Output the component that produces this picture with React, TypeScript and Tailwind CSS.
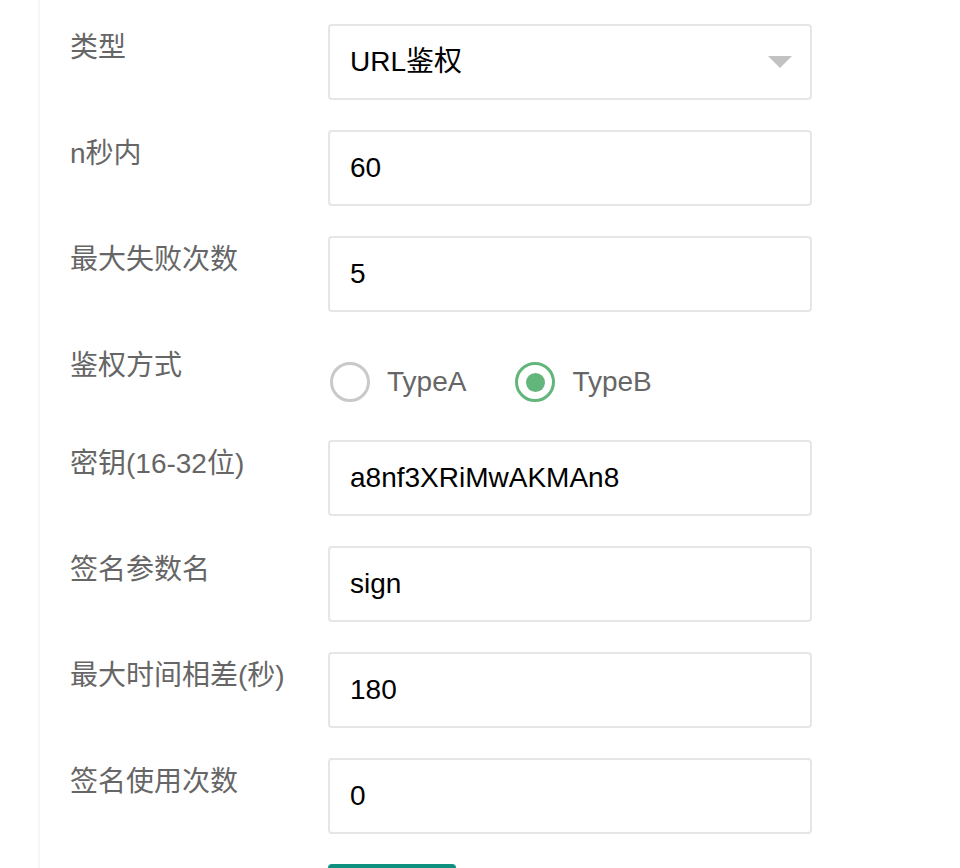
import React from "react";

const FONT = "font-['Liberation_Sans','Noto_Sans_CJK_SC',sans-serif]";

const FIELDS_TOP = [
  { label: "n秒内", value: "60" },
  { label: "最大失败次数", value: "5" },
];

const FIELDS_BOTTOM = [
  { label: "密钥(16-32位)", value: "a8nf3XRiMwAKMAn8" },
  { label: "签名参数名", value: "sign" },
  { label: "最大时间相差(秒)", value: "180" },
  { label: "签名使用次数", value: "0" },
];

function Label({ children }: { children: React.ReactNode }) {
  return (
    <div className="w-[258px] shrink-0 h-[48px] leading-[48px] text-[28px] text-[#666666]">
      {children}
    </div>
  );
}

function TextField({ label, value }: { label: string; value: string }) {
  return (
    <div className="flex shrink-0">
      <Label>{label}</Label>
      <input
        readOnly
        defaultValue={value}
        className={`w-[484px] h-[76px] border-2 border-[#e6e6e6] rounded-[4px] bg-white px-[20px] text-[28px] text-black outline-none ${FONT}`}
      />
    </div>
  );
}

function Radio({ label, checked }: { label: string; checked?: boolean }) {
  return (
    <label className="flex items-center gap-[17px] cursor-pointer">
      <span
        className={`w-[40px] h-[40px] rounded-full border-[3px] flex items-center justify-center ${
          checked ? "border-[#62b67b]" : "border-[#c9c9c9]"
        }`}
      >
        {checked && <span className="w-[19px] h-[19px] rounded-full bg-[#62b67b]" />}
      </span>
      <span className="text-[28px] text-[#666666]">{label}</span>
    </label>
  );
}

export default function App() {
  return (
    <div className={`w-[960px] h-[868px] overflow-hidden bg-white ${FONT}`}>
      <div className="ml-[38px] min-h-full border-l-2 border-[#f6f6f6] pl-[30px] pt-[24px] flex flex-col gap-[30px]">
        {/* Type select */}
        <div className="flex shrink-0">
          <Label>类型</Label>
          <div className="w-[484px] h-[76px] border-2 border-[#e6e6e6] rounded-[4px] bg-white pl-[20px] pr-[18px] flex items-center justify-between">
            <span className="text-[28px] text-black">URL鉴权</span>
            <svg width="24" height="12" viewBox="0 0 24 12">
              <path d="M0 0 H24 L12 12 Z" fill="#c2c2c2" />
            </svg>
          </div>
        </div>

        {FIELDS_TOP.map((f) => (
          <TextField key={f.label} label={f.label} value={f.value} />
        ))}

        {/* Auth mode */}
        <div className="flex h-[68px] shrink-0">
          <Label>鉴权方式</Label>
          <div className="flex items-center gap-[49px] pt-[12px] pl-[2px]">
            <Radio label="TypeA" />
            <Radio label="TypeB" checked />
          </div>
        </div>

        {FIELDS_BOTTOM.map((f) => (
          <TextField key={f.label} label={f.label} value={f.value} />
        ))}

        {/* Submit */}
        <div className="flex shrink-0">
          <div className="w-[258px] shrink-0" />
          <button className="w-[128px] h-[76px] rounded-[4px] bg-[#0f9180]" />
        </div>
      </div>
    </div>
  );
}
